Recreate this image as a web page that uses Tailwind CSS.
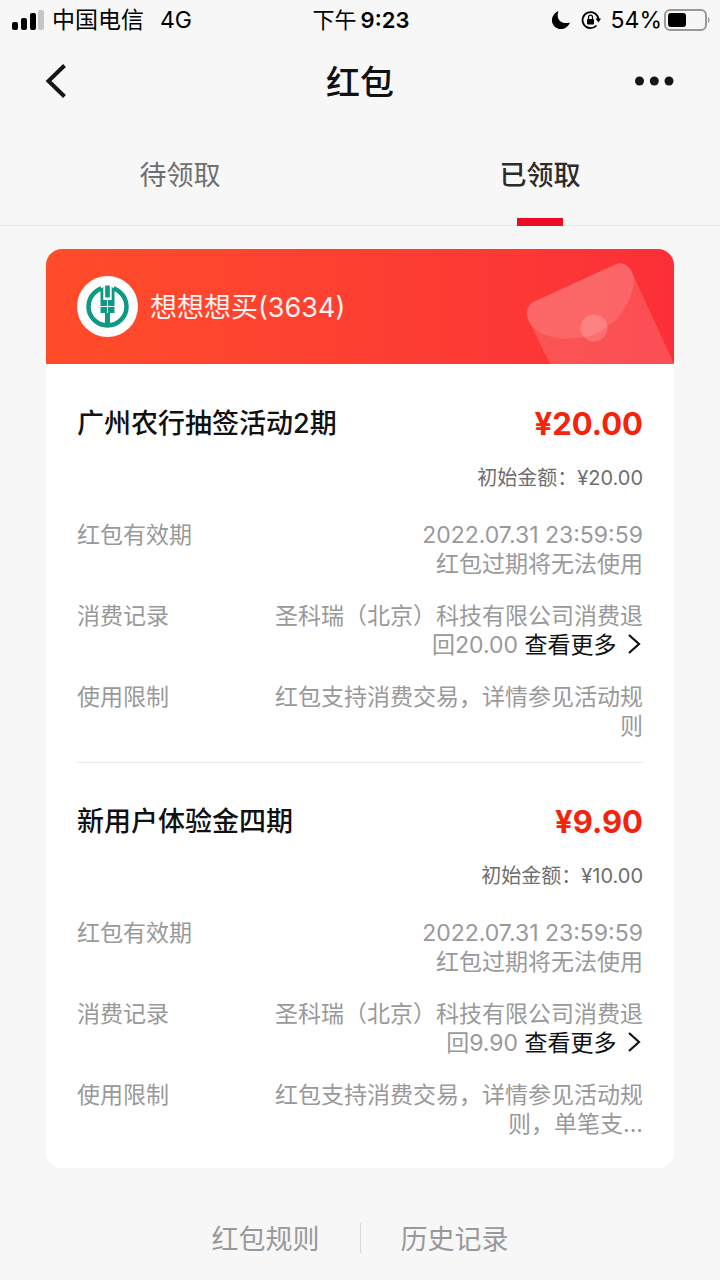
<!DOCTYPE html>
<html lang="zh-CN">
<head>
<meta charset="utf-8">
<meta name="viewport" content="width=device-width, initial-scale=1">
<title>红包</title>
<script src="https://cdn.jsdelivr.net/npm/@tailwindcss/browser@4"></script>
</head>
<body class="min-h-screen bg-[#f7f7f7] font-['Inter','Noto_Sans_CJK_SC',sans-serif] text-[#111]">

<!-- Status bar -->
<div class="grid h-10 grid-cols-3 items-center pr-2.5 pl-3 text-black">
  <div class="flex items-center gap-2 text-[23px]">
    <svg class="h-5 w-8 shrink-0" viewBox="0 0 32 20" aria-hidden="true">
      <rect x="0" y="12" width="6" height="8" rx="2"/>
      <rect x="9" y="8" width="6" height="12" rx="2"/>
      <rect x="18" y="3" width="6" height="17" rx="2"/>
      <rect x="26" y="0" width="6" height="20" rx="2" fill="#c6c6c6"/>
    </svg>
    <span>中国电信</span>
    <span class="ml-2">4G</span>
  </div>
  <div class="flex items-center justify-center gap-1 text-[22px]"><span>下午</span><span class="font-semibold">9:23</span></div>
  <div class="flex items-center justify-end gap-0.5 text-[23px]">
    <svg class="mr-2 h-5 w-5 shrink-0" viewBox="0 0 20 20" aria-hidden="true"><path d="M7.500 1C1 4-1 11 3 16c4.500 5 13 4 16-3.500C10 15 4.500 9 7.500 1z"/></svg>
    <svg class="mr-2 h-5 w-5 shrink-0" viewBox="0 0 20 20" fill="none" stroke="#000" stroke-width="1.800" aria-hidden="true">
      <path d="M17.500 9A8 8 0 1 0 15.500 15.500"/>
      <path d="M14.500 8.500h5.500l-2.500 4z" fill="#000" stroke="none"/>
      <rect x="6" y="9" width="7" height="5.500" rx="1" fill="#000" stroke="none"/>
      <path d="M7.500 9V7.200a2 2 0 0 1 4 0V9" stroke-width="1.200"/>
    </svg>
    <span>54%</span>
    <svg class="h-[22px] w-[46px] shrink-0" viewBox="0 0 46 22" aria-hidden="true">
      <rect x="1" y="1" width="41" height="20" rx="5" fill="none" stroke="#999" stroke-width="2"/>
      <rect x="4" y="4" width="18" height="14" rx="3"/>
      <path d="M44 8c2 1 2 5 0 6z" fill="#999"/>
    </svg>
  </div>
</div>

<!-- Navigation bar -->
<header class="flex h-[82px] items-center justify-between px-11">
  <button type="button" aria-label="返回" class="flex w-12">
    <svg class="h-9 w-6" viewBox="0 0 24 36" fill="none" stroke="#151515" stroke-width="4" aria-hidden="true"><path d="M20.500 2.500 4.500 18l16 15.500"/></svg>
  </button>
  <h1 class="pt-0.5 text-[34px] font-medium">红包</h1>
  <button type="button" aria-label="更多" class="flex w-12 justify-end">
    <svg class="h-9 w-[42px]" viewBox="0 0 42 36" fill="#151515" aria-hidden="true"><circle cx="5.500" cy="18" r="4.500"/><circle cx="20.300" cy="18" r="4.500"/><circle cx="35" cy="18" r="4.500"/></svg>
  </button>
</header>

<!-- Tabs -->
<nav class="grid h-[104px] grid-cols-2 border-b border-[#e9e9eb] text-[27px]" role="tablist">
  <button type="button" role="tab" aria-selected="false" class="pt-1.5 text-[#6e6e6e]">待领取</button>
  <button type="button" role="tab" aria-selected="true" class="relative pt-1.5 font-medium text-[#2c2c2c]">已领取
    <span class="absolute -bottom-px left-1/2 h-2 w-[46px] -translate-x-1/2 bg-[#ee0a24]"></span>
  </button>
</nav>

<main class="mx-[46px] mt-[23px] overflow-hidden rounded-2xl bg-white">
  <!-- Bank card -->
  <div class="relative flex h-[115px] items-center gap-3 bg-linear-to-r from-[#ff4c29] to-[#fb2f38] px-[31px] text-white">
    <svg class="size-[61px] shrink-0" viewBox="0 0 61 61" aria-hidden="true">
      <circle cx="30.500" cy="30.500" r="30.500" fill="#fff"/>
      <circle cx="30.500" cy="30.500" r="19" fill="none" stroke="#0d9983" stroke-width="4.500"/>
      <path d="M24 8h13v12H24z" fill="#fff"/>
      <path d="M23.500 12.500l3-1.500v13h8V11l3 1.500V37h-4.500v12h-5V37h-4.500z" fill="#0d9983"/>
      <path d="M28.200 9.500h4.600v12h-4.600z" fill="#0d9983"/>
      <path d="M27.300 9v14h6.400V9" fill="none" stroke="#fff" stroke-width="1.400"/>
      <path d="M30.500 23v14M23 30.500h15" fill="none" stroke="#fff" stroke-width="1"/>
    </svg>
    <span class="pt-1 text-[27px] text-white/95">想想想买(3634)</span>
    <svg class="absolute right-0 bottom-0 h-[115px] w-[154px]" viewBox="0 0 154 115" fill="#fff" aria-hidden="true">
      <path d="M13 53 94 16q10-5 17 5l43 94H30L8 70Q4 59 13 53z" fill-opacity=".15"/>
      <path d="M13 53 94 16q10-5 17 5c8 14-3 36-15 50q-5 4-10 7Q70 92 38 89 15 86 8 71 4 59 13 53z" fill-opacity=".12"/>
      <circle cx="74" cy="79" r="13.500" fill-opacity=".18"/>
    </svg>
  </div>

  <section class="mx-[31px] border-b border-[#ebebeb] pt-[37px] pb-[21px]">
    <div class="flex h-[46px] items-center justify-between">
      <h2 class="text-[27px] font-medium">广州农行抽签活动2期</h2>
      <strong class="text-[31px] font-bold text-[#f5220c]">¥20.00</strong>
    </div>
    <p class="mt-4 text-right text-[20px] leading-[30px] text-[#6e6e6e]">初始金额：¥20.00</p>
    <dl class="mt-7 flex flex-col gap-[23px] text-[23px] leading-[29px] text-[#999]">
      <div class="flex justify-between">
        <dt>红包有效期</dt>
        <dd class="w-[390px] text-right">2022.07.31 23:59:59<br>红包过期将无法使用</dd>
      </div>
      <div class="flex justify-between">
        <dt>消费记录</dt>
        <dd class="w-[390px] text-right">圣科瑞（北京）科技有限公司消费退回20.00 <a href="#" class="inline-block whitespace-nowrap text-[#111]">查看更多 <svg class="inline h-5 w-5 align-[-1px]" viewBox="0 0 20 20" fill="none" stroke="#111" stroke-width="2.200" aria-hidden="true"><path d="M6 1l10 9-10 9"/></svg></a></dd>
      </div>
      <div class="flex justify-between">
        <dt>使用限制</dt>
        <dd class="w-[390px] text-right">红包支持消费交易，详情参见活动规则</dd>
      </div>
    </dl>
  </section>

  <section class="mx-[31px] pt-9 pb-[29px]">
    <div class="flex h-[46px] items-center justify-between">
      <h2 class="text-[27px] font-medium">新用户体验金四期</h2>
      <strong class="text-[31px] font-bold text-[#f5220c]">¥9.90</strong>
    </div>
    <p class="mt-4 text-right text-[20px] leading-[30px] text-[#6e6e6e]">初始金额：¥10.00</p>
    <dl class="mt-7 flex flex-col gap-[23px] text-[23px] leading-[29px] text-[#999]">
      <div class="flex justify-between">
        <dt>红包有效期</dt>
        <dd class="w-[390px] text-right">2022.07.31 23:59:59<br>红包过期将无法使用</dd>
      </div>
      <div class="flex justify-between">
        <dt>消费记录</dt>
        <dd class="w-[390px] text-right">圣科瑞（北京）科技有限公司消费退回9.90 <a href="#" class="inline-block whitespace-nowrap text-[#111]">查看更多 <svg class="inline h-5 w-5 align-[-1px]" viewBox="0 0 20 20" fill="none" stroke="#111" stroke-width="2.200" aria-hidden="true"><path d="M6 1l10 9-10 9"/></svg></a></dd>
      </div>
      <div class="flex justify-between">
        <dt>使用限制</dt>
        <dd class="w-[390px] text-right">红包支持消费交易，详情参见活动规则，单笔支...</dd>
      </div>
    </dl>
  </section>
</main>

<footer class="grid grid-cols-[1fr_auto_1fr] items-center gap-10 pt-12 pb-2 text-[27px] leading-10 text-[#999]">
  <a href="#" class="pt-1 text-right">红包规则</a>
  <span class="h-[30px] w-px bg-[#d8d8d8]"></span>
  <a href="#" class="pt-1">历史记录</a>
</footer>
</body>
</html>
